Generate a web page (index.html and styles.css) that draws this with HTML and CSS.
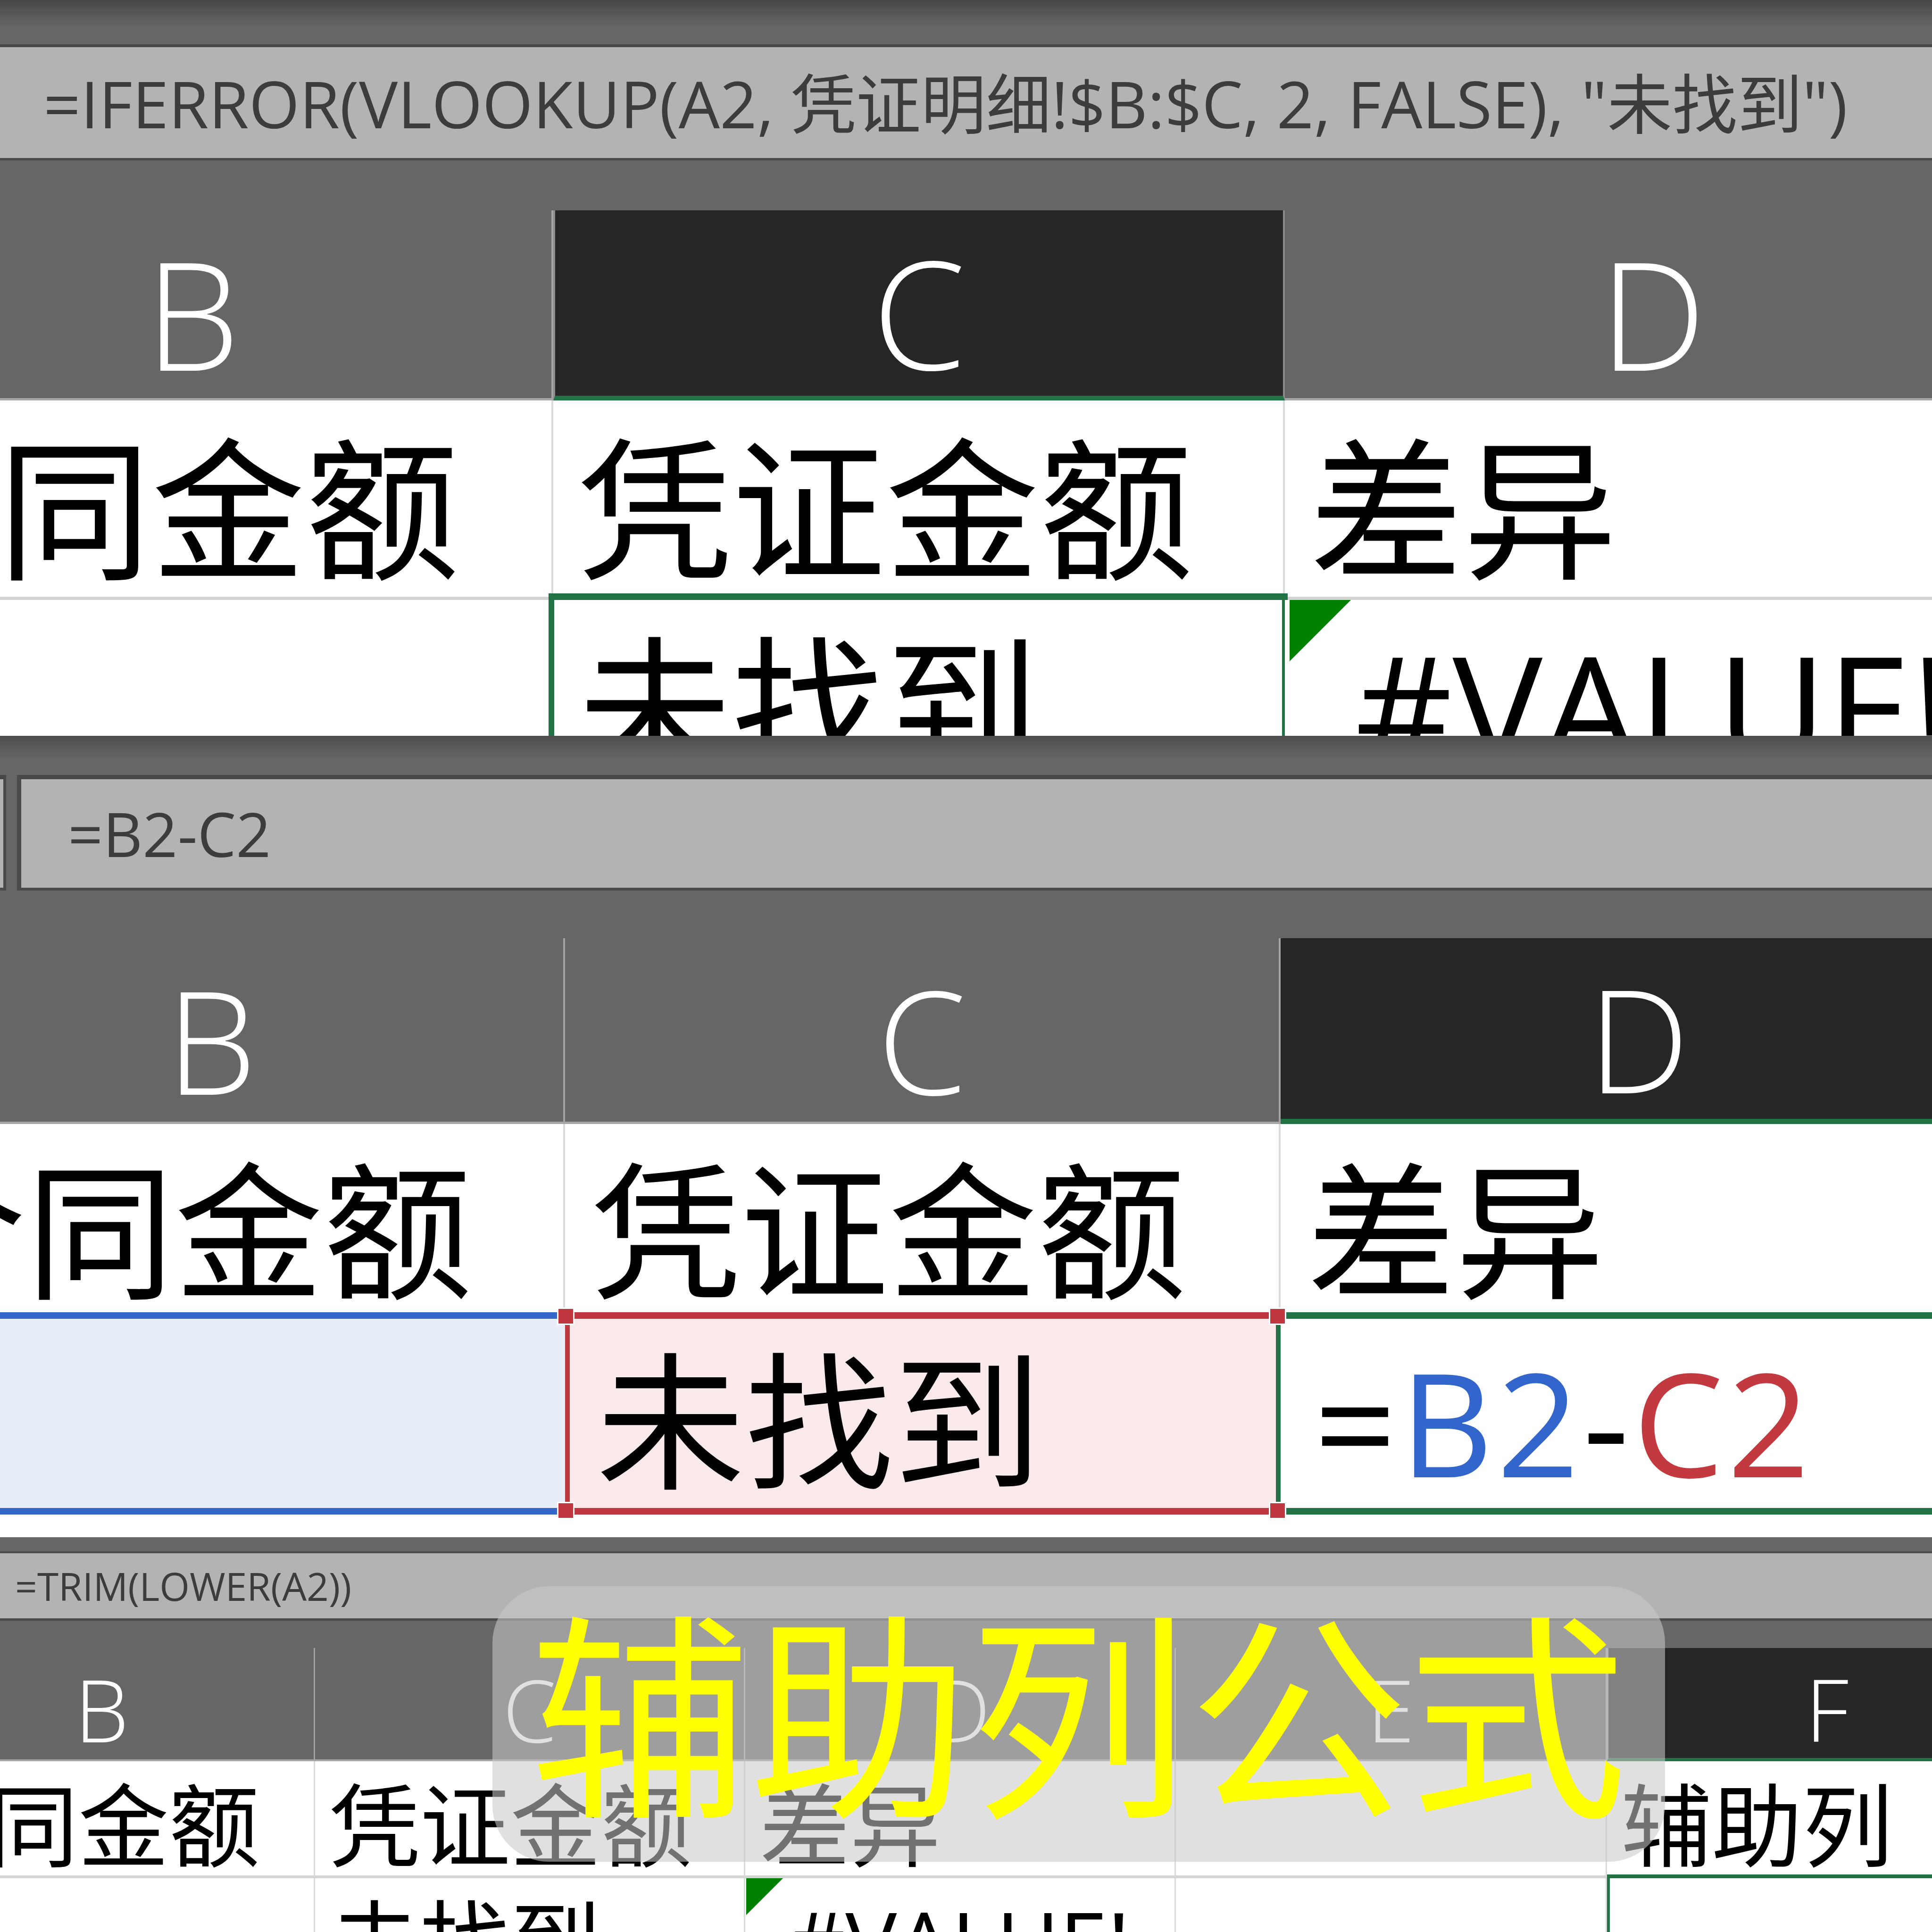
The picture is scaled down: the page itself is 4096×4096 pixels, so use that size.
FILE: index.html
```html
<!DOCTYPE html>
<html lang="zh-CN">
<head>
<meta charset="utf-8">
<title>辅助列公式</title>
<link rel="stylesheet" href="styles.css">
</head>
<body>
<div class="page">
  <section class="panel p1">
    <div class="topbar"></div>
    <div class="fbar"><span class="ftext">=IFERROR(VLOOKUP(A2, 凭证明细!$B:$C, 2, FALSE), "未找到")</span></div>
    <div class="gap"></div>
    <div class="sheet">
      <div class="hd">B</div>
      <div class="hd sel">C</div>
      <div class="hd">D</div>
      <div class="c r1 cjk lead">合同金额</div>
      <div class="c r1 cjk">凭证金额</div>
      <div class="c r1 cjk">差异</div>
      <div class="c"></div>
      <div class="c cjk active">未找到</div>
      <div class="c err"><span class="tri"></span>#VALUE!</div>
    </div>
  </section>

  <section class="panel p2">
    <div class="topbar"></div>
    <div class="frow">
      <div class="namebox"></div>
      <div class="fbar"><span class="ftext">=B2-C2</span></div>
    </div>
    <div class="gap"></div>
    <div class="sheet">
      <div class="hd">B</div>
      <div class="hd">C</div>
      <div class="hd sel">D</div>
      <div class="c r1 cjk lead">合同金额</div>
      <div class="c r1 cjk">凭证金额</div>
      <div class="c r1 cjk">差异</div>
      <div class="c ref-blue"></div>
      <div class="c cjk ref-red">未找到<span class="hdl tl"></span><span class="hdl tr"></span><span class="hdl bl"></span><span class="hdl br"></span></div>
      <div class="c edit"><span class="eq">=</span><span class="rb">B2</span><span class="eq">-</span><span class="rr">C2</span></div>
      <div class="c blank"></div>
      <div class="c blank"></div>
      <div class="c blank"></div>
    </div>
  </section>

  <section class="panel p3">
    <div class="topbar"></div>
    <div class="fbar"><span class="ftext">=TRIM(LOWER(A2))</span></div>
    <div class="gap"></div>
    <div class="sheet">
      <div class="hd">B</div>
      <div class="hd">C</div>
      <div class="hd">D</div>
      <div class="hd">E</div>
      <div class="hd sel">F</div>
      <div class="c r1 cjk lead">合同金额</div>
      <div class="c r1 cjk">凭证金额</div>
      <div class="c r1 cjk">差异</div>
      <div class="c r1"></div>
      <div class="c r1 cjk">辅助列</div>
      <div class="c"></div>
      <div class="c cjk">未找到</div>
      <div class="c err"><span class="tri"></span>#VALUE!</div>
      <div class="c"></div>
      <div class="c active"></div>
    </div>
  </section>

  <div class="caption">辅助列公式</div>
</div>
</body>
</html>
```

FILE: styles.css
```css
html, body {
  margin: 0;
  padding: 0;
}

body {
  background: #ffffff;
}

.page {
  position: relative;
  width: 4096px;
  height: 4096px;
  overflow: hidden;
  background: #ffffff;
  font-family: "Open Sans", "Noto Sans CJK SC", sans-serif;
}

.panel {
  display: flex;
  flex-direction: column;
  overflow: hidden;
  background: #666666;
}

.topbar,
.gap,
.fbar,
.frow,
.namebox {
  flex: none;
}

.fbar {
  display: flex;
  align-items: center;
  background: #b3b3b3;
  box-sizing: border-box;
  white-space: nowrap;
}

.ftext {
  color: #3c3c3c;
  line-height: 1;
  font-family: "Open Sans", "Noto Sans CJK SC", sans-serif;
}

.sheet {
  display: grid;
  flex: none;
}

.hd {
  display: flex;
  align-items: center;
  justify-content: center;
  box-sizing: border-box;
  color: #ffffff;
  line-height: 1;
  font-family: "Open Sans", sans-serif;
  font-weight: 300;
  background: #666666;
  border-right: 4px solid #a3a3a3;
  border-bottom: 5px solid #a6a6a6;
}

.hd.sel {
  background: #262626;
  border-right-color: #8a8a8a;
  border-bottom-color: #217346;
}

.c {
  position: relative;
  display: flex;
  align-items: center;
  box-sizing: border-box;
  background: #ffffff;
  border-right: 4px solid #dadada;
  white-space: nowrap;
  color: #000000;
  line-height: 1;
  font-family: "Open Sans", sans-serif;
}

.c.cjk {
  font-family: "Noto Sans CJK SC", sans-serif;
}

.c.r1 {
  border-bottom: 7px solid #d4d4d4;
}

.c.err {
  justify-content: center;
}

.tri {
  position: absolute;
  top: 0;
  left: 10px;
  width: 0;
  height: 0;
  border-top-style: solid;
  border-top-color: #008000;
  border-right-style: solid;
  border-right-color: transparent;
}

.c.active::before {
  content: "";
  position: absolute;
  box-sizing: border-box;
  pointer-events: none;
  border-style: solid;
  border-color: #217346;
}

/* ---------- Panel 1 ---------- */
.p1 {
  height: 1560px;
}

.p1 .topbar {
  height: 94px;
  background: linear-gradient(#474747, #666666 60%);
}

.p1 .fbar {
  height: 246px;
  border-top: 6px solid #474747;
  border-bottom: 5px solid #4a4a4a;
  padding-left: 92px;
}

.p1 .ftext {
  font-size: 138px;
}

.p1 .gap {
  height: 106px;
}

.p1 .sheet {
  margin-left: -353px;
  grid-template-columns: 1526px 1551px 1564px;
  grid-template-rows: 403px 423px 420px;
}

.p1 .hd {
  font-size: 319px;
  padding-top: 35px;
}

.p1 .hd.sel {
  border-bottom-width: 10px;
  border-left: 4px solid #8a8a8a;
}

.p1 .c {
  padding-left: 52px;
  font-size: 320px;
}

.p1 .c.cjk {
  font-size: 326px;
}

.p1 .c.lead {
  padding-left: 22px;
}

.p1 .c.r1 {
  padding-top: 10px;
}

.p1 .c.err {
  padding-left: 0;
  padding-top: 34px;
}

.p1 .tri {
  border-top-width: 130px;
  border-right-width: 130px;
}

.p1 .c.active::before {
  top: -14px;
  left: -10px;
  right: -10px;
  bottom: -40px;
  border-width: 14px 12px 0 12px;
}

/* ---------- Panel 2 ---------- */
.p2 {
  height: 1699px;
}

.p2 .topbar {
  height: 83px;
  background: linear-gradient(#4e4e4e, #666666 60%);
}

.p2 .frow {
  display: flex;
  height: 245px;
}

.p2 .namebox {
  width: 7px;
  box-sizing: content-box;
  background: #b3b3b3;
  border-top: 9px solid #474747;
  border-bottom: 6px solid #4a4a4a;
  border-right: 6px solid #4a4a4a;
  margin-right: 23px;
}

.p2 .fbar {
  flex: 1;
  border-top: 9px solid #474747;
  border-bottom: 6px solid #4a4a4a;
  border-left: 9px solid #4a4a4a;
  padding-left: 99px;
}

.p2 .ftext {
  font-size: 130px;
}

.p2 .gap {
  height: 101px;
}

.p2 .sheet {
  margin-left: -298px;
  grid-template-columns: 1496px 1517px 1522px;
  grid-template-rows: 394px 399px 429px 48px;
}

.p2 .hd {
  font-size: 304px;
  padding-top: 38px;
}

.p2 .hd.sel {
  border-bottom-width: 11px;
}

.p2 .c {
  padding-left: 56px;
  font-size: 305px;
}

.p2 .c.cjk {
  font-size: 315px;
}

.p2 .c.lead {
  padding-left: 38px;
}

.p2 .c.r1 {
  border-bottom: none;
  padding-top: 22px;
}

.p2 .c.blank {
  border-right: none;
}

.ref-blue {
  background: #e8eef8 !important;
  border-top: 14px solid #3467c8;
  border-bottom: 14px solid #3467c8;
  border-right: none !important;
}

.ref-red {
  background: #f9e9ea !important;
  border-top: 14px solid #c1373f;
  border-bottom: 14px solid #c1373f;
  border-left: 10px solid #c1373f;
  border-right: none !important;
}

.hdl {
  position: absolute;
  z-index: 3;
  width: 31px;
  height: 31px;
  background: #c1373f;
  border: 3px solid #ffffff;
}

.hdl.tl {
  top: -24px;
  left: -27px;
}

.hdl.tr {
  top: -24px;
  right: -12px;
}

.hdl.bl {
  bottom: -24px;
  left: -27px;
}

.hdl.br {
  bottom: -24px;
  right: -12px;
}

.edit {
  border-top: 14px solid #217346;
  border-bottom: 14px solid #217346;
  border-left: 10px solid #217346;
  border-right: none !important;
  margin-left: -10px;
  padding-left: 71px !important;
  padding-top: 34px;
  letter-spacing: 8px;
}

.eq {
  color: #000000;
}

.rb {
  color: #3366cc;
}

.rr {
  color: #c2393f;
}

/* ---------- Panel 3 ---------- */
.p3 {
  height: 837px;
}

.p3 .topbar {
  height: 30px;
  background: #666666;
}

.p3 .fbar {
  height: 147px;
  border-top: 4px solid #4c4c4c;
  border-bottom: 5px solid #4a4a4a;
  padding-left: 32px;
}

.p3 .ftext {
  font-size: 82px;
}

.p3 .gap {
  height: 58px;
}

.p3 .sheet {
  margin-left: -234px;
  grid-template-columns: 902px 912px 913px 914px 933px;
  grid-template-rows: 240px 248px 248px;
}

.p3 .hd {
  font-size: 183px;
  padding-top: 22px;
  border-right-width: 3px;
  border-bottom-width: 4px;
}

.p3 .hd.sel {
  border-bottom-width: 7px;
  border-left: 3px solid #a3a3a3;
}

.p3 .c {
  padding-left: 30px;
  font-size: 183px;
  border-right-width: 3px;
}

.p3 .c.cjk {
  font-size: 192px;
}

.p3 .c.lead {
  padding-left: 16px;
}

.p3 .c.r1 {
  border-bottom-width: 6px;
  padding-top: 8px;
}

.p3 .c.err {
  padding-left: 0;
  padding-top: 20px;
}

.p3 .tri {
  left: 2px;
  border-top-width: 78px;
  border-right-width: 78px;
}

.p3 .c.active::before {
  top: -8px;
  left: 0;
  right: 0;
  bottom: -40px;
  border-width: 8px 0 0 6px;
}

/* ---------- Caption overlay ---------- */
.caption {
  position: absolute;
  left: 1044px;
  top: 3363px;
  width: 2486px;
  height: 584px;
  box-sizing: border-box;
  padding-bottom: 80px;
  border-radius: 120px;
  background: rgba(200, 200, 200, 0.57);
  display: flex;
  align-items: center;
  justify-content: center;
  color: #ffff00;
  font-family: "Noto Sans CJK SC", sans-serif;
  font-size: 465px;
  line-height: 1;
  white-space: nowrap;
}
```
